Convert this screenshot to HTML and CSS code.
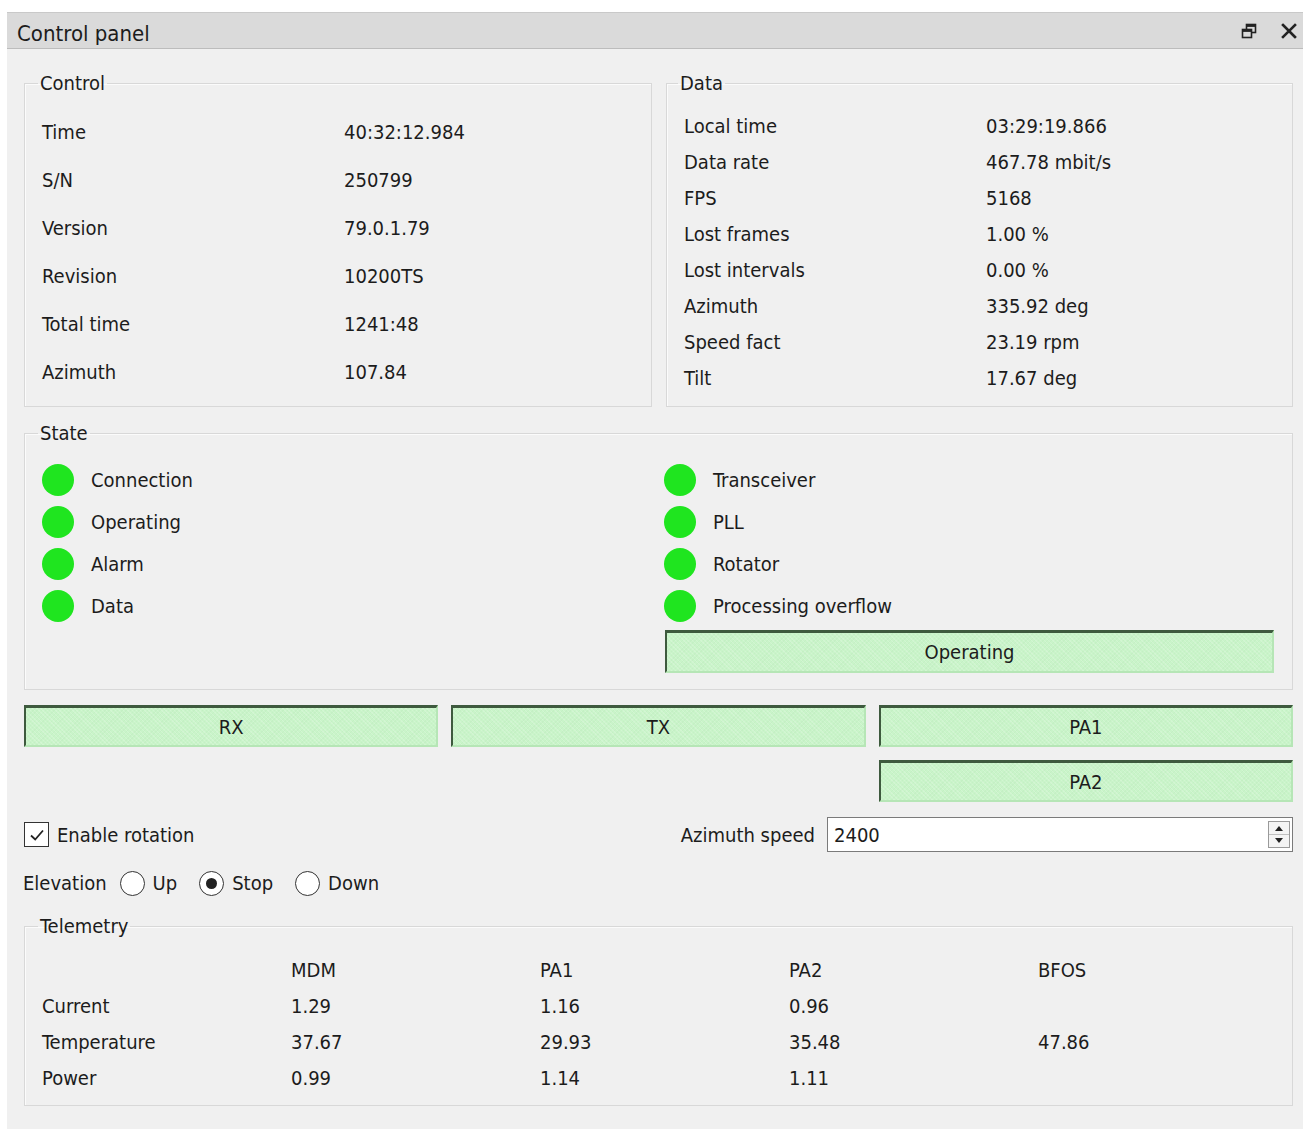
FILE: index.html
```html
<!DOCTYPE html>
<html lang="en">
<head>
<meta charset="utf-8">
<title>Control panel</title>
<link rel="stylesheet" href="styles.css">
</head>
<body>
<div class="dock">
  <div class="dock-title">
    <span class="dock-caption">Control panel</span>
    <span class="dock-buttons">
      <svg class="btn-float" width="16" height="16" viewBox="0 0 16 16">
        <rect x="5.5" y="1.5" width="9" height="8" fill="none" stroke="#222" stroke-width="1.6"/>
        <rect x="5.5" y="1.5" width="9" height="2.4" fill="#222"/>
        <rect x="1.5" y="6.5" width="9" height="8" fill="#dadada" stroke="#222" stroke-width="1.6"/>
        <rect x="1.5" y="6.5" width="9" height="2.4" fill="#222"/>
      </svg>
      <svg class="btn-close" width="16" height="16" viewBox="0 0 16 16">
        <path d="M2 2 L14 14 M14 2 L2 14" stroke="#222" stroke-width="2.6" stroke-linecap="square"/>
      </svg>
    </span>
  </div>

  <div class="dock-body">
    <div class="top-row">
      <fieldset class="group">
        <legend>Control</legend>
        <div class="kv kv-tall">
          <span>Time</span><span>40:32:12.984</span>
          <span>S/N</span><span>250799</span>
          <span>Version</span><span>79.0.1.79</span>
          <span>Revision</span><span>10200TS</span>
          <span>Total time</span><span>1241:48</span>
          <span>Azimuth</span><span>107.84</span>
        </div>
      </fieldset>
      <fieldset class="group group-data">
        <legend>Data</legend>
        <div class="kv kv-short">
          <span>Local time</span><span>03:29:19.866</span>
          <span>Data rate</span><span>467.78 mbit/s</span>
          <span>FPS</span><span>5168</span>
          <span>Lost frames</span><span>1.00 %</span>
          <span>Lost intervals</span><span>0.00 %</span>
          <span>Azimuth</span><span>335.92 deg</span>
          <span>Speed fact</span><span>23.19 rpm</span>
          <span>Tilt</span><span>17.67 deg</span>
        </div>
      </fieldset>
    </div>

    <fieldset class="group state">
      <legend>State</legend>
      <div class="state-grid">
        <div class="led-row"><span class="led"></span>Connection</div>
        <div class="led-row"><span class="led"></span>Transceiver</div>
        <div class="led-row"><span class="led"></span>Operating</div>
        <div class="led-row"><span class="led"></span>PLL</div>
        <div class="led-row"><span class="led"></span>Alarm</div>
        <div class="led-row"><span class="led"></span>Rotator</div>
        <div class="led-row"><span class="led"></span>Data</div>
        <div class="led-row"><span class="led"></span>Processing overflow</div>
        <div class="bar bar-operating">Operating</div>
      </div>
    </fieldset>

    <div class="bars">
      <div class="bar">RX</div>
      <div class="bar">TX</div>
      <div class="bar">PA1</div>
      <div class="bar bar-pa2">PA2</div>
    </div>

    <div class="rotation-row">
      <label class="check">
        <span class="checkbox">
          <svg width="18" height="18" viewBox="0 0 18 18"><path d="M3 9.5 L7.2 13.5 L15 4.5" fill="none" stroke="#222" stroke-width="1.8"/></svg>
        </span>
        Enable rotation
      </label>
      <div class="speed">
        <span>Azimuth speed</span>
        <div class="spin">
          <span class="spin-value">2400</span>
          <span class="spin-arrows">
            <svg width="22" height="27" viewBox="0 0 22 27">
              <rect x="0.5" y="0.5" width="21" height="26" fill="#f4f4f4" stroke="#9a9a9a"/>
              <line x1="1" y1="13.5" x2="21" y2="13.5" stroke="#c0c0c0"/>
              <path d="M7 10 L11 5 L15 10 Z" fill="#222"/>
              <path d="M7 17 L15 17 L11 22 Z" fill="#222"/>
            </svg>
          </span>
        </div>
      </div>
    </div>

    <div class="elevation-row">
      <span>Elevation</span>
      <label class="radio"><span class="radio-dot"></span>Up</label>
      <label class="radio"><span class="radio-dot checked"></span>Stop</label>
      <label class="radio"><span class="radio-dot"></span>Down</label>
    </div>

    <fieldset class="group telemetry">
      <legend>Telemetry</legend>
      <div class="tele-grid">
        <span></span><span>MDM</span><span>PA1</span><span>PA2</span><span>BFOS</span>
        <span>Current</span><span>1.29</span><span>1.16</span><span>0.96</span><span></span>
        <span>Temperature</span><span>37.67</span><span>29.93</span><span>35.48</span><span>47.86</span>
        <span>Power</span><span>0.99</span><span>1.14</span><span>1.11</span><span></span>
      </div>
    </fieldset>
  </div>
</div>
</body>
</html>
```

FILE: styles.css
```css
* { box-sizing: border-box; }

html, body {
  margin: 0;
  padding: 0;
  background: #ffffff;
}

body {
  font-family: "DejaVu Sans", "Liberation Sans", sans-serif;
  font-stretch: condensed;
  font-size: 20px;
  color: #1c1c1c;
  padding: 12px 3px 0 7px;
}

.dock {
  background: #f0f0f0;
  min-height: 1117px;
}

.dock-title {
  height: 37px;
  background: #dadada;
  border-top: 1px solid #c9c9c9;
  border-bottom: 1px solid #bcbcbc;
  display: flex;
  align-items: center;
  justify-content: space-between;
  padding: 5px 6px 0 10px;
}

.dock-caption { font-size: 22px; }

.dock-buttons {
  display: flex;
  align-items: center;
  gap: 24px;
  margin-top: -4px;
}

.dock-body {
  padding: 22px 10px 0 17px;
}

/* group boxes */
.group {
  margin: 0;
  border: 1px solid #d8d8d8;
  box-shadow: inset 1px 1px 0 #fbfbfb;
  padding: 13px 17px 10px 17px;
  min-width: 0;
}

.group legend {
  padding: 0 2px;
  margin-left: -4px;
  line-height: 24px;
}

.group-data legend { margin-left: -6px; }

.top-row {
  display: grid;
  grid-template-columns: 628px 627px;
  gap: 14px;
}

.kv {
  display: grid;
  grid-template-columns: 302px 1fr;
  align-items: center;
}

.kv-tall { grid-auto-rows: 48px; }
.kv-short { grid-auto-rows: 36px; }

/* state */
.state {
  margin-top: 14px;
  padding: 14px 18px 16px 17px;
}

.state-grid {
  display: grid;
  grid-template-columns: 610px 610px;
  column-gap: 12px;
  grid-template-rows: repeat(4, 42px) auto;
}

.led-row {
  display: flex;
  align-items: center;
  gap: 17px;
}

.led {
  width: 32px;
  height: 32px;
  border-radius: 50%;
  background: #1fe51f;
  flex: none;
}

.bar {
  height: 42px;
  display: flex;
  align-items: center;
  justify-content: center;
  background-color: #c9f4c9;
  background-image:
    repeating-linear-gradient(45deg, rgba(255,255,255,0.16) 0 1px, transparent 1px 3px),
    repeating-linear-gradient(-45deg, rgba(160,210,160,0.12) 0 1px, transparent 1px 3px);
  border-top: 3px solid #3e5a3e;
  border-left: 2px solid #3e5a3e;
  border-right: 2px solid #b6e6b6;
  border-bottom: 2px solid #b6e6b6;
}

.bar-operating {
  grid-column: 2;
  margin-top: 3px;
  height: 43px;
  width: 609px;
  margin-left: 1px;
}

.bars {
  margin-top: 15px;
  display: grid;
  grid-template-columns: repeat(3, 1fr);
  gap: 13px;
}

.bar-pa2 { grid-column: 3; }

/* rotation controls */
.rotation-row {
  margin-top: 15px;
  display: flex;
  align-items: center;
  justify-content: space-between;
  height: 35px;
}

.check {
  display: flex;
  align-items: center;
  gap: 8px;
}

.checkbox {
  width: 25px;
  height: 25px;
  border: 1.5px solid #333;
  background: #fff;
  display: flex;
  align-items: center;
  justify-content: center;
}

.speed {
  display: flex;
  align-items: center;
  gap: 12px;
}

.spin {
  width: 466px;
  height: 35px;
  border: 1px solid #7b7b7b;
  background: #fff;
  display: flex;
  align-items: center;
  justify-content: space-between;
  padding: 0 2px 0 6px;
}

.spin-arrows { display: flex; }

.elevation-row {
  margin-top: 18px;
  display: flex;
  align-items: center;
  height: 26px;
  margin-left: -1px;
}

.radio {
  display: flex;
  align-items: center;
  gap: 8px;
  margin-left: 13px;
}

.radio + .radio { margin-left: 22px; }

.radio-dot {
  width: 25px;
  height: 25px;
  border-radius: 50%;
  border: 1.5px solid #333;
  background: #fff;
  display: flex;
  align-items: center;
  justify-content: center;
}

.radio-dot.checked::after {
  content: "";
  width: 11px;
  height: 11px;
  border-radius: 50%;
  background: #222;
}

/* telemetry */
.telemetry {
  margin-top: 18px;
  padding: 14px 17px 9px 17px;
}

.tele-grid {
  display: grid;
  grid-template-columns: repeat(5, 249px);
  grid-auto-rows: 36px;
  align-items: center;
}
```
